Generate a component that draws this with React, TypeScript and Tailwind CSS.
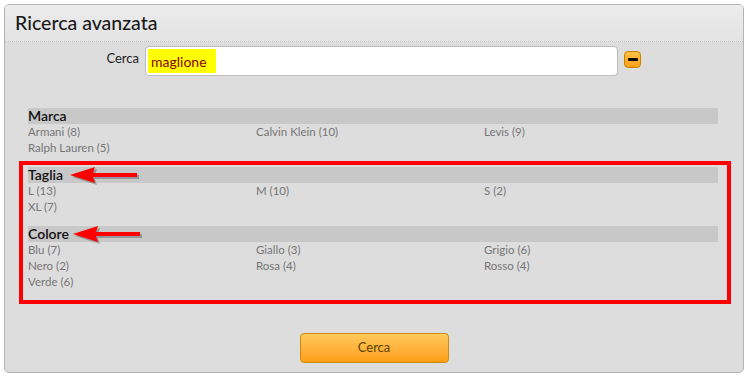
import React from "react";

type Section = { title: string; items: string[] };

const marca: Section = {
  title: "Marca",
  items: ["Armani (8)", "Calvin Klein (10)", "Levis (9)", "Ralph Lauren (5)"],
};

const filtered: Section[] = [
  { title: "Taglia", items: ["L (13)", "M (10)", "S (2)", "XL (7)"] },
  {
    title: "Colore",
    items: ["Blu (7)", "Giallo (3)", "Grigio (6)", "Nero (2)", "Rosa (4)", "Rosso (4)", "Verde (6)"],
  },
];

function Arrow({ left, top }: { left: number; top: number }) {
  return (
    <svg
      className="absolute pointer-events-none"
      style={{ left, top }}
      width="74"
      height="22"
      viewBox="0 0 74 22"
    >
      <g transform="translate(2,2)" fill="#000" opacity="0.25">
        <polygon points="0,8 25,0 23,6 67,6 67,10 23,10 25,16" />
      </g>
      <polygon points="0,8 25,0 23,6 67,6 67,10 23,10 25,16" fill="#ff0000" />
    </svg>
  );
}

function FilterBlock({ section, className }: { section: Section; className?: string }) {
  return (
    <div className={className}>
      <div className="h-4 bg-[#c8c8c8] text-[14px] leading-4 font-semibold text-[#111]">{section.title}</div>
      <div className="grid grid-cols-[228px_228px_1fr]">
        {section.items.map((it) => (
          <div key={it} className="h-4 text-[11.5px] leading-4 text-[#767676]">
            {it}
          </div>
        ))}
      </div>
    </div>
  );
}

export default function App() {
  return (
    <main className="w-[750px] h-[382px] bg-white pt-1 pl-1" style={{ fontFamily: "Lato, 'Open Sans', sans-serif" }}>
      <div className="w-[740px] h-[369px] rounded-[5px] border border-[#b4b4b4] bg-[#dddddd] overflow-hidden flex flex-col">
        <div className="h-[37px] shrink-0 bg-gradient-to-b from-[#ececec] to-[#e3e3e3] border-b border-dotted border-[#c4c4c4] pl-[10px] flex items-center">
          <h1 className="text-[19.5px] text-[#1a1a1a] font-medium">Ricerca avanzata</h1>
        </div>

        <div className="flex items-center mt-[4px] h-[30px]">
          <label className="w-[140px] text-right text-[13px] text-[#222] pr-[6px] -mt-[4px]">Cerca</label>
          <div className="w-[473px] h-[30px] bg-white border border-[#bdbdbd] rounded-[4px] p-[2px] flex">
            <span className="bg-[#ffff00] h-full px-[3px] flex items-center text-[14px] text-[#8a0000] w-[68px]">
              maglione
            </span>
          </div>
          <button className="ml-[6px] w-[17px] h-[17px] rounded-[4px] border border-[#c98200] bg-gradient-to-b from-[#ffc043] to-[#ff9e12] flex items-center justify-center -mt-[3px]">
            <span className="block w-[10px] h-[3px] bg-black rounded-[1px]" />
          </button>
        </div>

        <div className="ml-[23px] w-[690px] mt-[32px]">
          <FilterBlock section={marca} />
          <div className="relative mt-[5px] -ml-[9px] w-[712px] border-4 border-[#ff0000] pl-[5px] pr-[9px] pt-[2px] pb-[10px]">
            <FilterBlock section={filtered[0]} />
            <FilterBlock section={filtered[1]} className="mt-[11px]" />
            <Arrow left={47} top={2} />
            <Arrow left={50} top={61} />
          </div>
        </div>

        <div className="flex justify-center mt-[29px]">
          <button className="w-[149px] h-[30px] rounded-[4px] border border-[#cf8a12] bg-gradient-to-b from-[#ffc95a] to-[#ff9f10] text-[13px] text-[#5b4300]">
            Cerca
          </button>
        </div>
      </div>
    </main>
  );
}
